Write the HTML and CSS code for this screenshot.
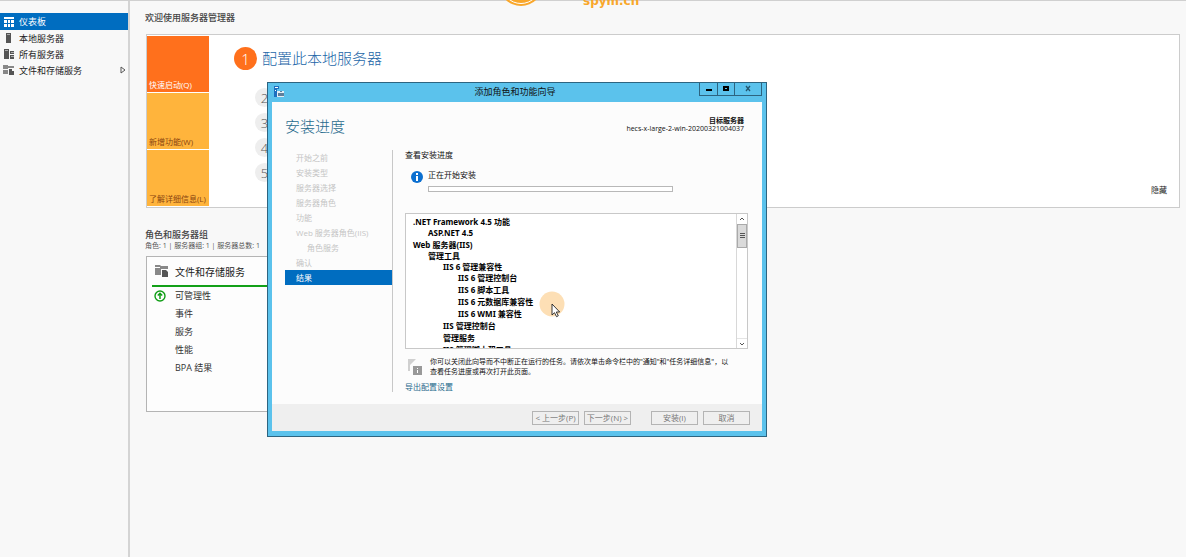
FILE: index.html
```
<!DOCTYPE html>
<html lang="zh-CN">

<head>
    <meta charset="UTF-8">
    <meta name="viewport" content="width=device-width, initial-scale=1.0">
    <title>服务器管理器</title>
    <link rel="stylesheet" href="styles.css">
</head>

<body>
    <div class="watermark">
        <svg class="watermark-logo" width="44" height="44" viewBox="0 0 44 44">
            <circle cx="22" cy="22" r="22" fill="#f9a72b" />
            <circle cx="22" cy="22" r="19.5" fill="none" stroke="#fff" stroke-width="1" />
        </svg>
        <span class="watermark-text">spym.cn</span>
    </div>

    <div class="page">
        <nav class="sidebar">
            <a class="side-item active" href="#">
                <svg class="side-icon" viewBox="0 0 12 12">
                    <path fill="#fff" d="M1 1h10v2H1zM1 4h3v3H1zM5 4h2v3H5zM8 4h3v3H8zM1 8h3v3H1zM5 8h2v3H5zM8 8h3v3H8z" />
                </svg>
                仪表板
            </a>
            <a class="side-item" href="#">
                <svg class="side-icon" viewBox="0 0 12 12">
                    <path fill="#555" d="M3 1h5v10H3z" />
                    <path fill="#aaa" d="M4 2h3v1H4z" />
                </svg>
                本地服务器
            </a>
            <a class="side-item" href="#">
                <svg class="side-icon" viewBox="0 0 12 12">
                    <path fill="#555" d="M1 1h5v10H1zM7 3h4v3H7zM7 7h4v4H7z" />
                    <path fill="#aaa" d="M2 2h3v1H2zM8 4h3v1H8zM8 8h3v1H8z" />
                </svg>
                所有服务器
            </a>
            <a class="side-item" href="#">
                <svg class="side-icon" viewBox="0 0 12 12">
                    <path fill="#888" d="M0 1h5v1h6v2H5v1H0zM0 6h5v4H0z" />
                    <path fill="#555" d="M6 5h3v2h2v4H6z" />
                </svg>
                文件和存储服务
                <svg class="side-arrow" width="6" height="8" viewBox="0 0 6 8">
                    <path d="M1 1l4 3-4 3z" fill="none" stroke="#555" />
                </svg>
            </a>
        </nav>

        <main class="main">
            <h1 class="welcome-title">欢迎使用服务器管理器</h1>
            <section class="welcome">
                <div class="tiles">
                    <button class="tile tile-on">快速启动(Q)</button>
                    <button class="tile">新增功能(W)</button>
                    <button class="tile">了解详细信息(L)</button>
                </div>
                <div class="steps">
                    <div class="step-main">
                        <span class="step-main-num">1</span>
                        <a class="step-main-text" href="#">配置此本地服务器</a>
                    </div>
                    <div class="step-list">
                        <span class="step-num">2</span>
                        <span class="step-num">3</span>
                        <span class="step-num">4</span>
                        <span class="step-num">5</span>
                    </div>
                </div>
                <button class="hide-btn">隐藏</button>
            </section>

            <h2 class="group-title">角色和服务器组</h2>
            <p class="group-sub">角色: 1 | 服务器组: 1 | 服务器总数: 1</p>
            <section class="role-card">
                <div class="role-head">
                    <svg width="14" height="14" viewBox="0 0 14 14">
                        <path fill="#888" d="M0 1h5l1 1h7v3H6v6H0z" />
                        <path fill="#fdfdfd" d="M0 3h5v1H0z" />
                        <path fill="#555" d="M7 6h4l2 2v5H7z" />
                    </svg>
                    文件和存储服务
                </div>
                <ul class="role-list">
                    <li>
                        <svg class="role-ok" width="12" height="12" viewBox="0 0 12 12">
                            <circle cx="6" cy="6" r="5" fill="none" stroke="#0f9d15" stroke-width="1.4" />
                            <path d="M6 9V3.5M3.8 5.5L6 3.3l2.2 2.2" fill="none" stroke="#0f9d15" stroke-width="1.5" />
                        </svg>
                        可管理性
                    </li>
                    <li>事件</li>
                    <li>服务</li>
                    <li>性能</li>
                    <li>BPA 结果</li>
                </ul>
            </section>
        </main>
    </div>

    <!-- 向导窗口 -->
    <div class="wizard" role="dialog" aria-labelledby="wizardTitle">
        <div class="wizard-bar">
            <svg class="wizard-icon" width="12" height="12" viewBox="0 0 12 12">
                <path fill="#1d6fc0" d="M1 0h5v3H4v8H1z" />
                <path fill="#fff" d="M2 1h3v1H2zM2 4h1v1H2z" />
                <path fill="#e4eef5" d="M4 5h7v6H4z" />
                <path fill="#5f7f9c" d="M5 7h6v3H5zM7 5h2v1H7z" />
            </svg>
            <span class="wizard-title" id="wizardTitle">添加角色和功能向导</span>
            <div class="win-btns">
                <button class="win-btn" aria-label="最小化">
                    <svg width="8" height="8" viewBox="0 0 8 8"><path d="M1 4h6v2H1z" /></svg>
                </button>
                <button class="win-btn" aria-label="最大化">
                    <svg width="8" height="8" viewBox="0 0 8 8"><path d="M2 2h4v3H2z" fill="none" stroke="#000" stroke-width="2" /></svg>
                </button>
                <button class="win-btn win-close" aria-label="关闭">
                    <svg width="8" height="8" viewBox="0 0 8 8"><path d="M2 1l4 5M6 1L2 6" stroke="#24566e" stroke-width="1.3" /></svg>
                </button>
            </div>
        </div>

        <div class="wizard-content">
            <div class="wizard-head">
                <h2 class="wizard-step">安装进度</h2>
                <div class="target">
                    <b>目标服务器</b>
                    <span>hecs-x-large-2-win-20200321004037</span>
                </div>
            </div>

            <div class="wizard-body">
                <ul class="wizard-nav">
                    <li>开始之前</li>
                    <li>安装类型</li>
                    <li>服务器选择</li>
                    <li>服务器角色</li>
                    <li>功能</li>
                    <li>Web 服务器角色(IIS)</li>
                    <li class="sub">角色服务</li>
                    <li>确认</li>
                    <li class="current">结果</li>
                </ul>

                <div class="result">
                    <p class="result-title">查看安装进度</p>
                    <div class="status">
                        <svg width="12" height="12" viewBox="0 0 12 12">
                            <circle cx="6" cy="6" r="6" fill="#0b6fd0" />
                            <path fill="#fff" d="M5 2h2v2H5zM5 5h2v5H5z" />
                        </svg>
                        <div class="status-info">
                            <span>正在开始安装</span>
                            <div class="progress" role="progressbar" aria-label="正在开始安装"></div>
                        </div>
                    </div>

                    <div class="feature-box">
                        <ul class="features">
                            <li><span class="parent">.NET Framework 4.5 功能</span>
                                <ul>
                                    <li>ASP.NET 4.5</li>
                                </ul>
                            </li>
                            <li><span class="parent">Web 服务器(IIS)</span>
                                <ul>
                                    <li><span class="parent">管理工具</span>
                                        <ul>
                                            <li><span class="parent">IIS 6 管理兼容性</span>
                                                <ul>
                                                    <li>IIS 6 管理控制台</li>
                                                    <li>IIS 6 脚本工具</li>
                                                    <li>IIS 6 元数据库兼容性</li>
                                                    <li>IIS 6 WMI 兼容性</li>
                                                </ul>
                                            </li>
                                            <li>IIS 管理控制台</li>
                                            <li>管理服务</li>
                                            <li>IIS 管理脚本和工具</li>
                                        </ul>
                                    </li>
                                </ul>
                            </li>
                        </ul>
                        <div class="scrollbar">
                            <button class="scroll-btn" aria-label="向上">
                                <svg width="6" height="4" viewBox="0 0 6 4"><path d="M1 3l2-2 2 2" fill="none" stroke="#555" /></svg>
                            </button>
                            <div class="scroll-thumb">
                                <svg width="5" height="6" viewBox="0 0 5 6"><path d="M0 0h5v1H0zM0 2h5v1H0zM0 4h5v1H0z" fill="#555" /></svg>
                            </div>
                            <button class="scroll-btn scroll-down" aria-label="向下">
                                <svg width="6" height="4" viewBox="0 0 6 4"><path d="M1 1l2 2 2-2" fill="none" stroke="#555" /></svg>
                            </button>
                        </div>
                    </div>

                    <div class="note">
                        <svg width="15" height="17" viewBox="0 0 15 17">
                            <path fill="#d0d0d0" d="M0 0h8L2 6v6H0z" />
                            <path fill="#999" d="M5 7h9v9H5z" />
                            <path fill="#fff" d="M9 9h1v1H9zM9 11h1v3H9z" />
                        </svg>
                        <p>你可以关闭此向导而不中断正在运行的任务。请依次单击命令栏中的"通知"和"任务详细信息"，以<br>查看任务进度或再次打开此页面。</p>
                    </div>
                    <a class="export" href="#">导出配置设置</a>
                </div>
            </div>

            <div class="wizard-foot">
                <button class="foot-btn" disabled>&lt; 上一步(P)</button>
                <button class="foot-btn" disabled>下一步(N) &gt;</button>
                <button class="foot-btn foot-install" disabled>安装(I)</button>
                <button class="foot-btn" disabled>取消</button>
            </div>
        </div>
    </div>

    <!-- 鼠标指针 -->
    <div class="pointer">
        <svg width="26" height="26" viewBox="0 0 26 26">
            <circle cx="13" cy="13" r="12.5" fill="#fddfb5" />
            <path d="M13 13v11l2.5-2.3 2 4 1.8-.9-2-3.8h3.4z" fill="#fff" stroke="#222" stroke-width=".9" />
        </svg>
    </div>
</body>

</html>
```
FILE: styles.css
```
* {
    box-sizing: border-box;
}

body {
    margin: 0;
    min-height: 100vh;
    position: relative;
    overflow: hidden;
    background: #f8f8f8;
    color: #222;
    font-family: "Open Sans", "Noto Sans CJK SC", sans-serif;
    font-size: 9px;
}

h1,
h2,
p,
ul {
    margin: 0;
    padding: 0;
}

ul {
    list-style: none;
}

a {
    color: inherit;
    text-decoration: none;
}

button {
    margin: 0;
    padding: 0;
    border: 0;
    background: none;
    color: inherit;
    font-family: inherit;
    font-size: 8px;
}

svg {
    display: block;
    flex: none;
}

/* 水印 */
.watermark {
    position: absolute;
    top: -38px;
    left: 499px;
    display: flex;
    align-items: flex-end;
    gap: 40px;
}

.watermark-text {
    color: #f9a72b;
    font-family: "DejaVu Sans", sans-serif;
    font-size: 12px;
    font-weight: bold;
    line-height: 10px;
}

/* 主页面 */
.page {
    display: flex;
    min-height: 100vh;
    border-top: 1px solid #d0d0d0;
}

.sidebar {
    width: 130px;
    flex: none;
    padding-top: 12px;
    border-right: 2px solid #d4d4d4;
}

.side-item {
    display: flex;
    align-items: center;
    gap: 4px;
    height: 16px;
    padding: 0 2px 0 3px;
}

.side-item.active {
    height: 17px;
    background: #006dc0;
    color: #fff;
}

.side-icon {
    width: 12px;
    height: 12px;
}

.side-arrow {
    margin-left: auto;
}

.main {
    flex: 1;
    padding: 11px 6px 0 15px;
}

.welcome-title,
.group-title {
    color: #444;
    font-size: 9px;
    font-weight: 500;
    line-height: 12px;
}

.welcome {
    display: flex;
    margin: 10px 0 0 1px;
    border: 1px solid #ccc;
    background: #fff;
}

.tiles {
    display: flex;
    flex-direction: column;
    gap: 1px;
    padding: 1px 0;
}

.tile {
    display: flex;
    align-items: flex-end;
    width: 62px;
    height: 56px;
    padding: 0 0 2px 2px;
    background: #ffb43c;
    color: #8a4510;
    line-height: 10px;
    white-space: nowrap;
}

.tile-on {
    background: #ff701c;
    color: #fff;
}

.steps {
    padding: 12px 0 0 25px;
}

.step-main {
    display: flex;
    align-items: center;
    gap: 5px;
}

.step-main-num,
.step-num {
    display: flex;
    align-items: center;
    justify-content: center;
    border-radius: 50%;
    font-weight: 300;
}

.step-main-num {
    width: 23px;
    height: 23px;
    background: #ff701c;
    color: #fff;
    font-size: 15px;
}

.step-main-text {
    color: #1c66a8;
    font-size: 15px;
    font-weight: 300;
    line-height: 23px;
}

.step-list {
    display: flex;
    flex-direction: column;
    gap: 6px;
    padding: 18px 0 0 21px;
}

.step-num {
    width: 19px;
    height: 19px;
    background: #eee;
    color: #555;
    font-size: 13px;
}

.hide-btn {
    align-self: flex-end;
    margin: 0 12px 12px auto;
    line-height: 10px;
}

.group-title {
    margin-top: 21px;
}

.group-sub {
    color: #555;
    font-size: 7px;
    line-height: 9px;
}

.role-card {
    width: 250px;
    height: 156px;
    margin: 6px 0 0 1px;
    padding: 0 5px;
    border: 1px solid #b4b4b4;
    background: #fdfdfd;
}

.role-head {
    display: flex;
    align-items: center;
    gap: 6px;
    height: 30px;
    padding-left: 3px;
    border-bottom: 2px solid #12a018;
    font-size: 10px;
}

.role-list li {
    position: relative;
    padding-left: 23px;
    color: #333;
    line-height: 18px;
}

.role-ok {
    position: absolute;
    top: 3px;
    left: 2px;
}

/* 向导窗口 */
.wizard {
    position: absolute;
    top: 82px;
    left: 267px;
    width: 500px;
    padding: 0 4px 5px;
    border: 1px solid #2d6480;
    background: #5bc2ec;
    color: #111;
    font-size: 8px;
}

.wizard-bar {
    display: flex;
    align-items: flex-start;
    height: 19px;
}

.wizard-icon {
    margin: 3px 0 0 1px;
}

.wizard-title {
    flex: 1;
    padding-left: 46px;
    font-size: 9px;
    line-height: 18px;
    text-align: center;
}

.win-btns {
    display: flex;
    border: 1px solid #2d6480;
    border-top: 0;
}

.win-btn {
    display: flex;
    align-items: center;
    justify-content: center;
    width: 17px;
    height: 12px;
}

.win-btn + .win-btn {
    border-left: 1px solid #2d6480;
}

.win-close {
    width: 27px;
}

.wizard-content {
    background: #fcfcfc;
}

.wizard-head {
    display: flex;
    justify-content: space-between;
    align-items: center;
    height: 48px;
    padding: 0 18px 2px 13px;
}

.wizard-step {
    color: #1f6a8c;
    font-size: 15px;
    font-weight: 300;
}

.target {
    display: flex;
    flex-direction: column;
    font-size: 7px;
    line-height: 8px;
    text-align: right;
}

.wizard-body {
    display: flex;
    padding: 0 13px 12px;
}

.wizard-nav {
    width: 108px;
    flex: none;
    border-right: 1px solid #c8c8c8;
    color: #c4c4c4;
}

.wizard-nav li {
    padding-left: 11px;
    line-height: 15px;
}

.wizard-nav .sub {
    padding-left: 22px;
}

.wizard-nav .current {
    background: #006dc0;
    color: #fff;
}

.result {
    flex: 1;
    min-width: 0;
    padding-left: 12px;
}

.result-title {
    line-height: 9px;
}

.status {
    display: flex;
    align-items: center;
    gap: 5px;
    padding: 10px 0 0 6px;
}

.status-info {
    display: flex;
    flex-direction: column;
    gap: 6px;
    line-height: 11px;
}

.status svg {
    margin-bottom: 8px;
}

.progress {
    width: 245px;
    height: 6px;
    border: 1px solid #b8b8b8;
    background: #fff;
}

.feature-box {
    display: flex;
    height: 136px;
    margin: 21px 1px 0 0;
    border: 1px solid #c8c8c8;
    background: #fff;
}

.features {
    flex: 1;
    overflow: hidden;
    padding: 2px 0 0 7px;
    color: #000;
    font-family: "Noto Sans", "Noto Sans CJK SC", sans-serif;
    font-weight: bold;
    line-height: 12px;
}

.features ul {
    padding-left: 15px;
}

.parent {
    display: block;
    line-height: 11px;
}

.scrollbar {
    display: flex;
    flex-direction: column;
    width: 11px;
    border-left: 1px solid #d8d8d8;
}

.scroll-btn,
.scroll-thumb {
    display: flex;
    align-items: center;
    justify-content: center;
    height: 10px;
}

.scroll-thumb {
    height: 24px;
    border: 1px solid #aaa;
    background: #dadada;
}

.scroll-down {
    margin-top: auto;
    border-top: 1px solid #e4e4e4;
}

.note {
    display: flex;
    gap: 7px;
    padding: 8px 0 0 3px;
    font-size: 7px;
    line-height: 10px;
    white-space: nowrap;
}

.note svg {
    margin-top: 2px;
}

.export {
    display: block;
    margin-top: 5px;
    color: #1f6a8c;
    line-height: 10px;
}

.wizard-foot {
    display: flex;
    justify-content: flex-end;
    align-items: center;
    gap: 5px;
    height: 27px;
    padding-right: 12px;
    background: #efefef;
}

.foot-btn {
    width: 47px;
    height: 14px;
    border: 1px solid #b4b4b4;
    color: #777;
    line-height: 12px;
    white-space: nowrap;
}

.foot-install {
    margin-left: 15px;
}

/* 鼠标指针 */
.pointer {
    position: absolute;
    top: 291px;
    left: 539px;
}

.pointer svg {
    overflow: visible;
}
```
